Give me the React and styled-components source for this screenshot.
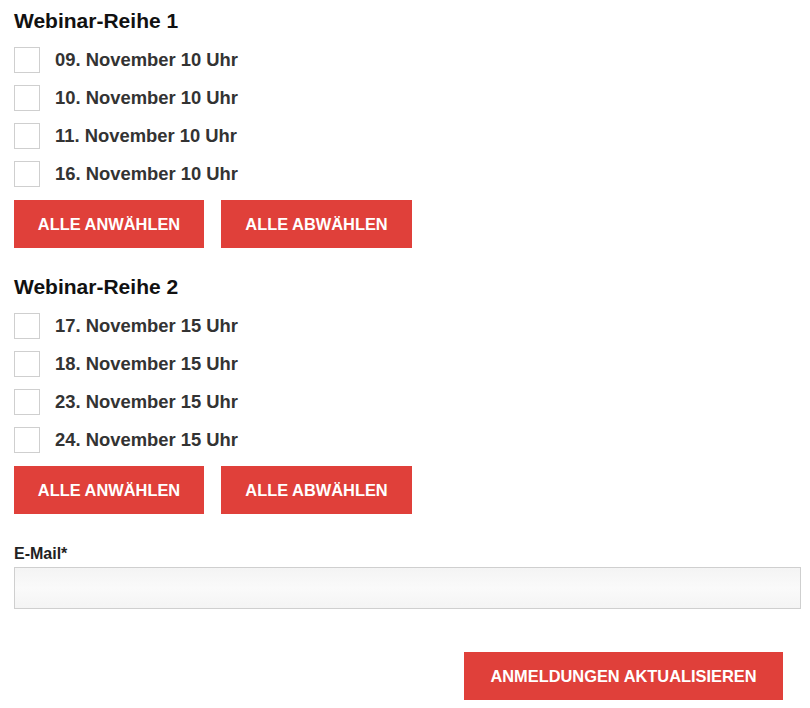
import React from 'react';
import styled, { createGlobalStyle } from 'styled-components';

const Global = createGlobalStyle`
  body {
    margin: 0;
    background: #fff;
    font-family: "Liberation Sans", Arial, sans-serif;
  }
`;

const Form = styled.form`
  padding: 10px 10px 8px 14px;
  display: flex;
  flex-direction: column;
`;

const Series = styled.section`
  margin-bottom: ${(p) => (p.$last ? 31 : 28)}px;
`;

const Heading = styled.h3`
  margin: 0 0 15px;
  font-size: 21px;
  line-height: 22px;
  font-weight: 700;
  color: #111;
`;

const List = styled.div`
  display: flex;
  flex-direction: column;
  gap: 12px;
`;

const Option = styled.label`
  display: flex;
  align-items: center;
  gap: 15px;
  font-size: 18.4px;
  font-weight: 700;
  color: #333;
  cursor: pointer;
`;

const Box = styled.span`
  width: 24px;
  height: 24px;
  border: 1px solid #cfcfcf;
  background: #fff;
  flex-shrink: 0;
`;

const Buttons = styled.div`
  display: flex;
  gap: 17px;
  margin-top: 13px;
`;

const Button = styled.button`
  background: #e0403a;
  color: #fff;
  border: 0;
  height: 48px;
  width: ${(p) => p.$w || 190}px;
  font-family: "Liberation Sans", Arial, sans-serif;
  font-size: 16.4px;
  font-weight: 700;
  text-transform: uppercase;
  cursor: pointer;
  padding: 0;
`;

const Label = styled.div`
  font-size: 16px;
  font-weight: 700;
  color: #222;
  margin-bottom: 4px;
`;

const Input = styled.input`
  box-sizing: border-box;
  width: 787px;
  height: 42px;
  border: 1px solid #cfcfcf;
  background: linear-gradient(#f4f4f4, #fafafa 50%, #f4f4f4);
  outline: none;
`;

const Footer = styled.div`
  display: flex;
  justify-content: flex-end;
  padding-right: 17px;
  margin-top: 43px;
`;

const series = [
  { title: 'Webinar-Reihe 1', dates: ['09. November 10 Uhr', '10. November 10 Uhr', '11. November 10 Uhr', '16. November 10 Uhr'] },
  { title: 'Webinar-Reihe 2', dates: ['17. November 15 Uhr', '18. November 15 Uhr', '23. November 15 Uhr', '24. November 15 Uhr'] },
];

export default function App() {
  return (
    <>
      <Global />
      <Form onSubmit={(e) => e.preventDefault()}>
        {series.map((s, i) => (
          <Series key={s.title} $last={i === series.length - 1}>
            <Heading>{s.title}</Heading>
            <List>
              {s.dates.map((d) => (
                <Option key={d}>
                  <Box />
                  {d}
                </Option>
              ))}
            </List>
            <Buttons>
              <Button type="button">Alle anwählen</Button>
              <Button type="button" $w={191}>Alle abwählen</Button>
            </Buttons>
          </Series>
        ))}
        <Label>E-Mail*</Label>
        <Input type="email" />
        <Footer>
          <Button type="submit" $w={319}>Anmeldungen aktualisieren</Button>
        </Footer>
      </Form>
    </>
  );
}
